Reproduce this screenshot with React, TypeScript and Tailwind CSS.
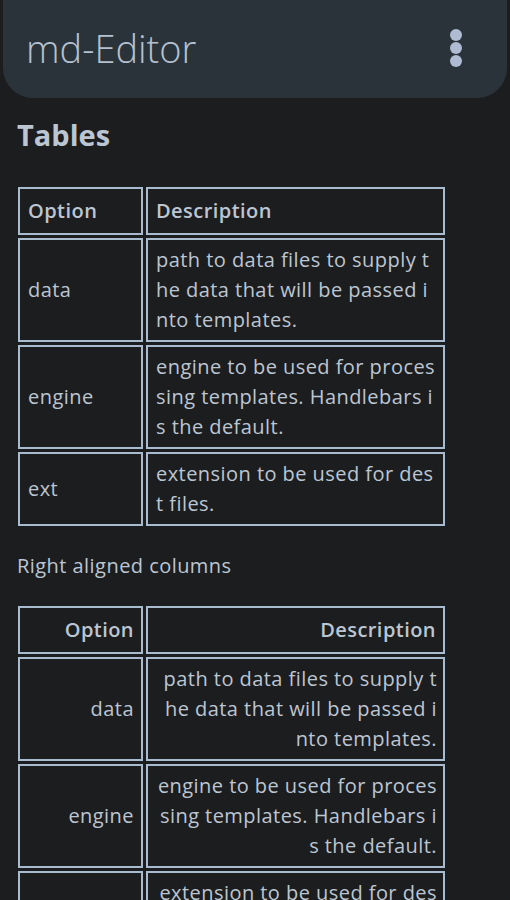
import React from "react";

type Row = { option: string; desc: string[] };

const rows: Row[] = [
  {
    option: "data",
    desc: ["path to data files to supply t", "he data that will be passed i", "nto templates."],
  },
  {
    option: "engine",
    desc: ["engine to be used for proces", "sing templates. Handlebars i", "s the default."],
  },
  {
    option: "ext",
    desc: ["extension to be used for des", "t files."],
  },
];

function MdTable({ right }: { right?: boolean }) {
  const align = right ? "text-right" : "text-left";
  return (
    <table className="table-fixed w-[433px] border-separate border-spacing-[3px] ml-[15px]">
      <thead>
        <tr>
          <th className={`w-[125px] border-2 border-[#a9bccf] pl-[8px] pr-[7px] py-[7px] font-semibold leading-[30px] ${align}`}>
            Option
          </th>
          <th className={`w-[299px] border-2 border-[#a9bccf] pl-[8px] pr-[7px] py-[7px] font-semibold leading-[30px] ${align}`}>
            Description
          </th>
        </tr>
      </thead>
      <tbody>
        {rows.map((r) => (
          <tr key={r.option}>
            <td className={`border-2 border-[#a9bccf] pl-[8px] pr-[7px] py-[5px] leading-[30px] align-middle ${align}`}>
              {r.option}
            </td>
            <td className={`border-2 border-[#a9bccf] pl-[8px] pr-[6px] py-[5px] leading-[30px] whitespace-nowrap ${align}`}>
              {r.desc.map((line, i) => (
                <div key={i}>{line}</div>
              ))}
            </td>
          </tr>
        ))}
      </tbody>
    </table>
  );
}

export default function App() {
  return (
    <div
      className="min-h-[900px] w-[510px] bg-[#1c1d1f] text-[#bcc6d2] text-[20px] tracking-[0.45px]"
      style={{ fontFamily: "'Open Sans', Lato, sans-serif" }}
    >
      <header className="h-[98px] bg-[#2b333a] rounded-b-[30px] flex items-center justify-between pl-[23px] pr-[45px] pb-[2px] mx-[3px]">
        <h1 className="text-[38px] font-light text-[#b4c1d0] tracking-[0px]">md-Editor</h1>
        <div className="flex flex-col items-center gap-[1px]">
          <span className="w-[12px] h-[12px] rounded-full bg-[#aebbd2]" />
          <span className="w-[12px] h-[12px] rounded-full bg-[#aebbd2]" />
          <span className="w-[12px] h-[12px] rounded-full bg-[#aebbd2]" />
        </div>
      </header>

      <h2 className="mt-[20px] ml-[17px] text-[29px] font-bold leading-[34px] tracking-[0px] text-[#bcc6d2]">Tables</h2>

      <div className="mt-[32px]">
        <MdTable />
      </div>

      <p className="ml-[17px] mt-[22px] leading-[30px]">Right aligned columns</p>

      <div className="mt-[22px]">
        <MdTable right />
      </div>
    </div>
  );
}
